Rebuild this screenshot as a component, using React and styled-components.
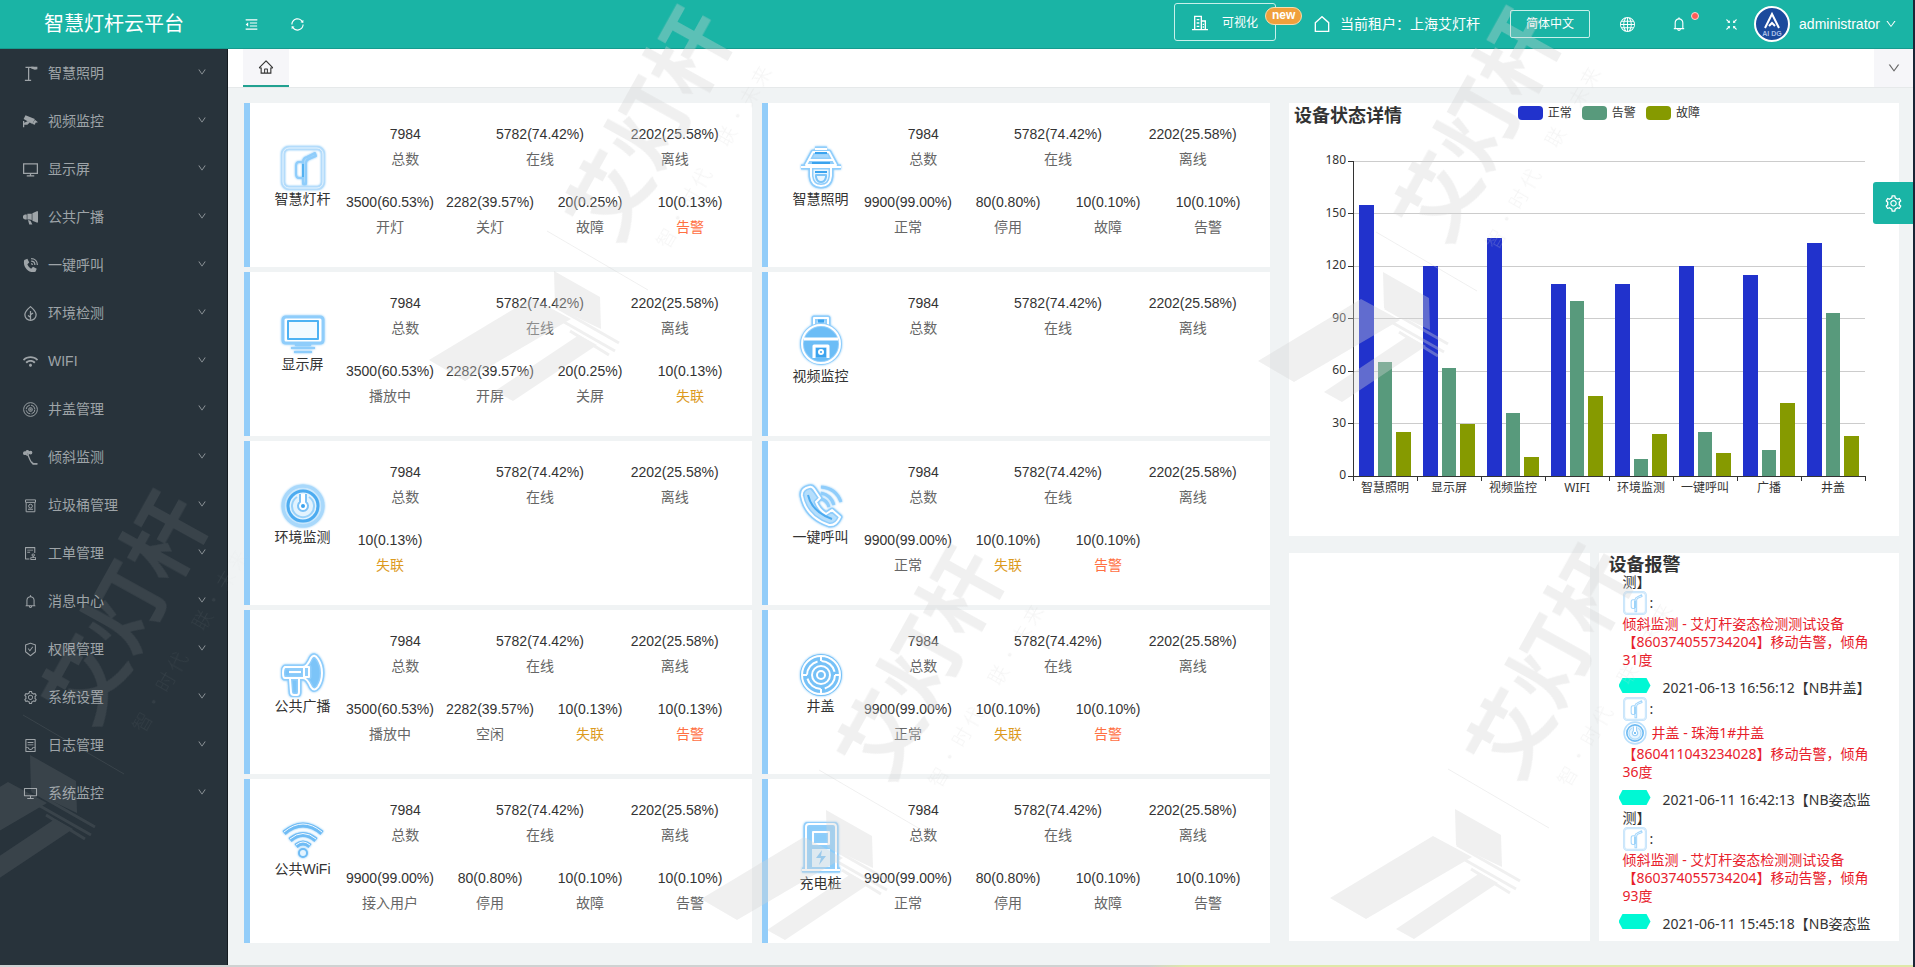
import styled, { createGlobalStyle, css } from 'styled-components'
import {
  AiOutlineAudit,
  AiOutlineBell,
  AiOutlineContainer,
  AiOutlineDesktop,
  AiOutlineDown,
  AiOutlineFullscreenExit,
  AiOutlineHome,
  AiOutlineMenuFold,
  AiOutlineSafetyCertificate,
  AiOutlineSetting,
  AiOutlineSync,
} from 'react-icons/ai'
import { BsGlobe } from 'react-icons/bs'
import { FaWifi } from 'react-icons/fa'

const colors = {
  teal: '#1ab4a5',
  sidebar: '#28333b',
  page: '#f0f3f4',
  bar: '#93cdf9',
  lost: '#dc9a1e',
  alarm: '#ff7043',
}

// sidebar glyphs

const Glyph = ({ children, fill = 'none', stroke = 'currentColor', width = 2 }) => (
  <svg
    viewBox="0 0 24 24"
    width="1em"
    height="1em"
    fill={fill}
    stroke={stroke}
    strokeWidth={width}
    aria-hidden="true"
  >
    {children}
  </svg>
)

const LampPostGlyph = () => (
  <Glyph>
    <path d="M9 23V2h8M3 23h10M4 2h6" />
    <path d="M13 1h10v4l-4 1-6-2z" fill="currentColor" stroke="none" />
  </Glyph>
)

const CameraGlyph = () => (
  <Glyph fill="currentColor" stroke="none">
    <path d="M4 2l15 6-4 8L1 8z" />
    <path d="M19 9l5 4-4 1-1 3-4-1z" />
    <path d="M0 11h2v3l6-3 3 2-4 4H2v4H0z" />
  </Glyph>
)

const ScreenGlyph = () => (
  <Glyph>
    <path d="M1 3h22v15H1zM12 18v4M6 22h12" />
  </Glyph>
)

const HornGlyph = () => (
  <Glyph fill="currentColor" stroke="none">
    <path d="M22 2h2v18h-2l-7-3V5zM7 6h7v10l-3-1H7zM3 7h3v8H3l-3-2V9zM8 16l4 1 3 6h-5z" />
  </Glyph>
)

const PhoneGlyph = () => (
  <Glyph>
    <path
      d="M2 3l5-2 3 6-3 3c1 3 3 5 6 7l3-3 6 3-2 5C9 25-1 14 2 3z"
      fill="currentColor"
      stroke="none"
    />
    <path d="M13 1c6 0 10 4 10 10M13 5c4 0 6 2 6 6M13 9q2 0 2 2" />
  </Glyph>
)

const LeafGlyph = () => (
  <Glyph>
    <path d="M12 1c6 5 9 9 9 13a9 9 0 0 1-18 0c0-4 3-8 9-13z" />
    <path d="M12 8v14M12 14l4-3M12 18l-4-3" />
  </Glyph>
)

const CoverGlyph = () => (
  <Glyph width={1.5}>
    <circle cx="12" cy="12" r="11" />
    <circle cx="12" cy="12" r="7" strokeDasharray="9 2" />
    <circle cx="12" cy="12" r="3" />
    <circle cx="12" cy="12" r="1" />
  </Glyph>
)

const TiltGlyph = () => (
  <Glyph>
    <path d="M3 3l4 6M7 9l4-6M8 8c3 7 4 12 8 14h7" />
    <circle cx="3" cy="5" r="2" fill="currentColor" />
    <circle cx="7" cy="3" r="2" fill="currentColor" />
    <circle cx="12" cy="4" r="2" fill="currentColor" />
    <path d="M15 18l2 3h6v2h-8z" fill="currentColor" stroke="none" />
  </Glyph>
)

const BinGlyph = () => (
  <Glyph width={1.6}>
    <path d="M5 8v14h14V8M4 3h16v4H4zM8 18h8" />
    <circle cx="12" cy="13" r="3" />
  </Glyph>
)

const BuildingGlyph = () => (
  <Glyph>
    <path d="M4 22V2h10v20M14 9h6v13M0 22h24M7 7h4M7 12h4M7 17h4M17 13v2M17 17v2" />
  </Glyph>
)

const HouseGlyph = () => (
  <Glyph>
    <path d="M2 10L12 1l10 9v13H2z" />
  </Glyph>
)

// glowing device icons, every outline is a blue halo with a white core

const Neon = ({ d }) => (
  <>
    <path d={d} stroke="#8fcdfb" strokeWidth="5" />
    <path d={d} stroke="#fff" strokeWidth="2" />
  </>
)

const PoleIcon = () => (
  <>
    <rect x="2" y="2" width="40" height="40" rx="6" stroke="#b4dcfb" strokeWidth="4" />
    <rect x="2" y="2" width="40" height="40" rx="6" stroke="#e6f4fe" strokeWidth="1" />
    <path d="M22 38V16q0-4 4-5l8-4 1 3-7 3q-3 1-3 4v21z" stroke="#8fcdfb" strokeWidth="2" />
    <path d="M22 16h-4q-3 0-3 4v8q0 4 3 4h4" stroke="#8fcdfb" strokeWidth="2" />
    <path d="M22 18v13" stroke="#53b1f1" strokeWidth="2" />
  </>
)

const LightIcon = () => (
  <>
    <path d="M14 5h16l7 14H7z" fill="#a6d7fb" />
    <path d="M12 22h20v9q-1 9-10 9t-10-9z" fill="#e9f6ff" />
    <Neon d="M16 3h12M14 6h16l7 13H7zM2 21h40M10 14h24M12 22v8q1 10 10 10t10-10v-8" />
    <path d="M16 7h12M13 17h18M16 26h12" stroke="#3ba3ee" strokeWidth="2" />
    <path d="M17 29h10v2q-1 5-5 5t-5-5z" stroke="#7cc4f8" strokeWidth="2" />
  </>
)

const DisplayIcon = () => (
  <>
    <path
      d="M5 2h34q3 0 3 3v20q0 3-3 3H5q-3 0-3-3V5q0-3 3-3z"
      stroke="#8fcdfb"
      strokeWidth="3"
      fill="#fff"
    />
    <path d="M10 33h24M14 30h16M13 37h18" stroke="#8fcdfb" strokeWidth="2" />
    <rect x="7" y="6" width="30" height="18" stroke="#4fb2f3" strokeWidth="2" fill="#f3faff" />
  </>
)

const DomeIcon = () => (
  <>
    <circle cx="22" cy="29" r="18" fill="#6cbdf6" />
    <Neon d="M15 11V3h14v8" />
    <circle cx="22" cy="29" r="19" stroke="#8fcdfb" strokeWidth="4" />
    <circle cx="22" cy="29" r="19" stroke="#fff" strokeWidth="2" />
    <path d="M5 24h34M15 43V31h14v12" stroke="#fff" strokeWidth="3" />
    <rect x="17" y="33" width="10" height="9" fill="#3ba3ee" />
    <circle cx="22" cy="37" r="3" fill="#fff" />
    <circle cx="22" cy="37" r="1" fill="#3ba3ee" />
    <path d="M19 6h6" stroke="#3ba3ee" strokeWidth="3" />
  </>
)

const DialIcon = () => (
  <>
    <circle cx="22" cy="22" r="20" stroke="#a8d8fb" strokeWidth="3" />
    <circle cx="22" cy="22" r="15" stroke="#4cabf0" strokeWidth="3" fill="#e3f3fe" />
    <path d="M16 13a11 11 0 1 0 12 0" stroke="#9ad2fa" strokeWidth="2" />
    <path d="M19 10v8a5 5 0 1 0 6 0v-8" stroke="#7cc2f7" strokeWidth="2" fill="#fff" />
    <circle cx="22" cy="22" r="2" fill="#3ba3ee" />
  </>
)

const CallIcon = () => (
  <>
    <path d="M10 4L3 9q-2 18 26 32 6 2 12-8l-8-7-6 4q-7-4-9-11l2-5z" fill="#b5defc" />
    <Neon d="M10 3q-8 2-7 9 4 21 27 29 7 1 11-8l-8-7-6 4q-7-4-10-12l4-4-6-9q-2-3-5-2z" />
    <path
      d="M22 3q15 1 20 15M22 9q10 2 13 12M22 15q6 1 8 8"
      stroke="#8fcdfb"
      strokeWidth="3"
    />
    <path d="M9 11q4 17 24 24" stroke="#4cabf0" strokeWidth="2" />
  </>
)

const HornIcon = () => (
  <>
    <path d="M4 14h22l6-9q8 2 8 15t-8 16l-6-12H4zM10 26h7l2 15h-7z" fill="#7cc4f8" />
    <Neon d="M4 14h18q4 0 8-9 3-5 7 1 4 6 4 14t-4 14q-4 5-7 0-4-9-8-9H4q-2 0-2-5t2-6zM9 26l1 13q0 3 3 3h3q2 0 2-3V26M23 14h5v10h-5zM8 19h12" />
  </>
)

const ManholeIcon = () => (
  <>
    <circle cx="22" cy="22" r="21" fill="#76c1f7" />
    <circle cx="22" cy="22" r="19" stroke="#fff" strokeWidth="2" />
    <circle cx="22" cy="22" r="14" stroke="#fff" strokeWidth="2" strokeDasharray="18 4" />
    <circle cx="22" cy="22" r="9" stroke="#fff" strokeWidth="2" />
    <circle cx="22" cy="22" r="4" stroke="#fff" strokeWidth="2" />
    <path d="M22 3v5M22 36v5M3 22h5M36 22h5" stroke="#fff" strokeWidth="2" />
  </>
)

const WaveIcon = () => (
  <>
    <path d="M3 11q19-16 38 0M9 18q13-11 26 0M15 24q7-6 14 0" stroke="#6fbcf5" strokeWidth="5" />
    <path d="M3 10q19-16 38 0M9 17q13-11 26 0M15 23q7-6 14 0" stroke="#f2f9ff" strokeWidth="1" />
    <circle cx="22" cy="31" r="4" stroke="#6fbcf5" strokeWidth="2" fill="#e4f4ff" />
  </>
)

const ChargeIcon = () => (
  <>
    <path d="M7 3h30v44H7z" fill="#8bccf9" />
    <Neon d="M7 47V5q0-3 3-3h24q3 0 3 3v42M3 48h38M14 10h16v12H14z" />
    <rect x="13" y="27" width="18" height="18" fill="#e4f4ff" />
    <path d="M23 28l-6 8h5l-2 7 7-9h-5z" fill="#7cc4f8" />
  </>
)

const deviceIcons = {
  pole: { Icon: PoleIcon, height: 44 },
  light: { Icon: LightIcon, height: 44 },
  display: { Icon: DisplayIcon, height: 40 },
  dome: { Icon: DomeIcon, height: 52 },
  dial: { Icon: DialIcon, height: 44 },
  call: { Icon: CallIcon, height: 44 },
  horn: { Icon: HornIcon, height: 44 },
  manhole: { Icon: ManholeIcon, height: 44 },
  wave: { Icon: WaveIcon, height: 38 },
  charge: { Icon: ChargeIcon, height: 52 },
}

const DeviceIcon = ({ name, small }) => {
  const { Icon, height } = deviceIcons[name]

  return (
    <StyledDeviceSvg
      viewBox={`0 0 44 ${height}`}
      width={small ? 24 : 44}
      height={small ? 24 : height}
      fill="none"
      strokeLinejoin="round"
      $small={small}
      aria-hidden="true"
    >
      <Icon />
    </StyledDeviceSvg>
  )
}

// data

const menu = [
  { label: '智慧照明', Icon: LampPostGlyph },
  { label: '视频监控', Icon: CameraGlyph },
  { label: '显示屏', Icon: ScreenGlyph },
  { label: '公共广播', Icon: HornGlyph },
  { label: '一键呼叫', Icon: PhoneGlyph },
  { label: '环境检测', Icon: LeafGlyph },
  { label: 'WIFI', Icon: FaWifi },
  { label: '井盖管理', Icon: CoverGlyph },
  { label: '倾斜监测', Icon: TiltGlyph },
  { label: '垃圾桶管理', Icon: BinGlyph },
  { label: '工单管理', Icon: AiOutlineAudit },
  { label: '消息中心', Icon: AiOutlineBell },
  { label: '权限管理', Icon: AiOutlineSafetyCertificate },
  { label: '系统设置', Icon: AiOutlineSetting },
  { label: '日志管理', Icon: AiOutlineContainer },
  { label: '系统监控', Icon: AiOutlineDesktop },
]

const totals = [
  ['7984', '总数'],
  ['5782(74.42%)', '在线'],
  ['2202(25.58%)', '离线'],
]

const devices = [
  {
    name: '智慧灯杆',
    icon: 'pole',
    stats: [
      ['3500(60.53%)', '开灯'],
      ['2282(39.57%)', '关灯'],
      ['20(0.25%)', '故障'],
      ['10(0.13%)', '告警', 'alarm'],
    ],
  },
  {
    name: '智慧照明',
    icon: 'light',
    stats: [
      ['9900(99.00%)', '正常'],
      ['80(0.80%)', '停用'],
      ['10(0.10%)', '故障'],
      ['10(0.10%)', '告警'],
    ],
  },
  {
    name: '显示屏',
    icon: 'display',
    stats: [
      ['3500(60.53%)', '播放中'],
      ['2282(39.57%)', '开屏'],
      ['20(0.25%)', '关屏'],
      ['10(0.13%)', '失联', 'lost'],
    ],
  },
  { name: '视频监控', icon: 'dome', stats: [] },
  { name: '环境监测', icon: 'dial', stats: [['10(0.13%)', '失联', 'lost']] },
  {
    name: '一键呼叫',
    icon: 'call',
    stats: [
      ['9900(99.00%)', '正常'],
      ['10(0.10%)', '失联', 'lost'],
      ['10(0.10%)', '告警', 'alarm'],
    ],
  },
  {
    name: '公共广播',
    icon: 'horn',
    stats: [
      ['3500(60.53%)', '播放中'],
      ['2282(39.57%)', '空闲'],
      ['10(0.13%)', '失联', 'lost'],
      ['10(0.13%)', '告警', 'alarm'],
    ],
  },
  {
    name: '井盖',
    icon: 'manhole',
    stats: [
      ['9900(99.00%)', '正常'],
      ['10(0.10%)', '失联', 'lost'],
      ['10(0.10%)', '告警', 'alarm'],
    ],
  },
  {
    name: '公共WiFi',
    icon: 'wave',
    stats: [
      ['9900(99.00%)', '接入用户'],
      ['80(0.80%)', '停用'],
      ['10(0.10%)', '故障'],
      ['10(0.10%)', '告警'],
    ],
  },
  {
    name: '充电桩',
    icon: 'charge',
    stats: [
      ['9900(99.00%)', '正常'],
      ['80(0.80%)', '停用'],
      ['10(0.10%)', '故障'],
      ['10(0.10%)', '告警'],
    ],
  },
]

const series = [
  { label: '正常', color: '#2132cc' },
  { label: '告警', color: '#589a7c' },
  { label: '故障', color: '#869a00' },
]

const chartData = [
  { label: '智慧照明', values: [155, 65, 25] },
  { label: '显示屏', values: [120, 62, 30] },
  { label: '视频监控', values: [136, 36, 11] },
  { label: 'WIFI', values: [110, 100, 46] },
  { label: '环境监测', values: [110, 10, 24] },
  { label: '一键呼叫', values: [120, 25, 13] },
  { label: '广播', values: [115, 15, 42] },
  { label: '井盖', values: [133, 93, 23] },
]

const alerts = [
  {
    id: 1,
    source: '测】',
    title: '倾斜监测 - 艾灯杆姿态检测测试设备',
    text: '【860374055734204】移动告警，倾角31度',
  },
  {
    id: 2,
    time: '2021-06-13 16:56:12',
    source: '【NB井盖】',
    icon: 'dial',
    title: '井盖 - 珠海1#井盖',
    text: '【860411043234028】移动告警，倾角36度',
  },
  {
    id: 3,
    time: '2021-06-11 16:42:13',
    source: '【NB姿态监测】',
    title: '倾斜监测 - 艾灯杆姿态检测测试设备',
    text: '【860374055734204】移动告警，倾角93度',
  },
  { id: 4, time: '2021-06-11 15:45:18', source: '【NB姿态监' },
]

// chart

const CHART = { left: 64, top: 33, step: 64, unit: 1.75 }

const StatusChart = () => {
  const bottom = CHART.top + 180 * CHART.unit
  const right = CHART.left + chartData.length * CHART.step

  return (
    <StyledChartSvg viewBox="0 0 610 407" role="img" aria-label="设备状态详情">
      {[0, 30, 60, 90, 120, 150, 180].map(value => {
        const y = bottom - value * CHART.unit

        return (
          <g key={value}>
            <path d={`M${CHART.left} ${y}H${right}`} stroke="#ccc" />
            <path d={`M${CHART.left - 5} ${y}h5`} stroke="#333" />
            <text x={CHART.left - 7} y={y + 3} textAnchor="end">
              {value}
            </text>
          </g>
        )
      })}
      {chartData.map(({ label, values }, index) => {
        const x = CHART.left + index * CHART.step

        return (
          <g key={label}>
            {values.map((value, i) => (
              <rect
                key={series[i].label}
                x={x + 6 + i * 18.5}
                y={bottom - value * CHART.unit}
                width="14.5"
                height={value * CHART.unit}
                fill={series[i].color}
              />
            ))}
            <path d={`M${x} ${bottom}v5`} stroke="#333" />
            <text x={x + 32} y={bottom + 16} textAnchor="middle">
              {label}
            </text>
          </g>
        )
      })}
      <path
        d={`M${CHART.left} ${CHART.top}V${bottom}H${right}v5`}
        fill="none"
        stroke="#333"
      />
    </StyledChartSvg>
  )
}

// watermark

const stamps = [
  { x: 0, y: 0, opacity: 0.36 },
  { x: 829, y: 1, opacity: 0.36 },
  { x: 272, y: 539, opacity: 0.36 },
  { x: 901, y: 538, opacity: 0.36 },
  { x: -524, y: 484, opacity: 0.1 },
]

const Watermark = () => (
  <StyledWatermarkSvg aria-hidden="true">
    {stamps.map(({ x, y, opacity }) => (
      <g key={x} transform={`translate(${x} ${y})`} fill="#d5d5d5" opacity={opacity}>
        <path d="M554 271l46 26 1 32-46-22zM429 360l103-62 39 21-106 62zM495 391l84-56 18 10-84 56z" />
        <path
          d="M556 307l63 36M550 314l65 37M570 331l39 24"
          stroke="#d5d5d5"
          strokeWidth="3"
        />
        <path d="M547 231l101 59" stroke="#d5d5d5" />
        <text transform="translate(616 246) rotate(-61)" fontSize="82" fontWeight="700">
          艾灯杆
        </text>
        <g fontSize="19" fontWeight="300" opacity="0.7">
          <text transform="translate(668 250) rotate(-60)">智 · 时 代</text>
          <text transform="translate(728 148) rotate(-60)">联 · 未 来</text>
        </g>
      </g>
    ))}
  </StyledWatermarkSvg>
)

// page parts

const Header = () => (
  <StyledHeader>
    <StyledLogoH1>智慧灯杆云平台</StyledLogoH1>
    <StyledHeaderTools>
      <IconButton aria-label="收起菜单">
        <AiOutlineMenuFold />
      </IconButton>
      <IconButton aria-label="刷新">
        <AiOutlineSync />
      </IconButton>
    </StyledHeaderTools>
    <VisualButton>
      <BuildingGlyph />
      <span>可视化</span>
      <StyledNewBadge>new</StyledNewBadge>
    </VisualButton>
    <StyledTenantDiv>
      <HouseGlyph />
      当前租户：上海艾灯杆
    </StyledTenantDiv>
    <LanguageButton>简体中文</LanguageButton>
    <StyledHeaderIcons>
      <IconButton aria-label="语言">
        <BsGlobe />
      </IconButton>
      <BellButton aria-label="消息">
        <AiOutlineBell />
        <StyledDot />
      </BellButton>
      <IconButton aria-label="退出全屏">
        <AiOutlineFullscreenExit />
      </IconButton>
    </StyledHeaderIcons>
    <UserButton>
      <svg viewBox="0 0 36 36" width="36" height="36" aria-hidden="true">
        <circle cx="18" cy="18" r="17" fill="#1b4a9c" stroke="#fff" strokeWidth="2" />
        <path d="M11 22l7-14 7 14M15 20l3-3 3 3" fill="none" stroke="#fff" strokeWidth="2" />
        <text x="18" y="30" fontSize="7" fontWeight="700" fill="#a9bfe6" textAnchor="middle">
          AI DG
        </text>
      </svg>
      administrator
      <AiOutlineDown />
    </UserButton>
  </StyledHeader>
)

const Sidebar = () => (
  <StyledNav>
    <StyledMenuUl>
      {menu.map(({ label, Icon }) => (
        <li key={label}>
          <MenuButton>
            <Icon />
            <StyledMenuLabel>{label}</StyledMenuLabel>
            <StyledMenuArrow />
          </MenuButton>
        </li>
      ))}
    </StyledMenuUl>
  </StyledNav>
)

const Stat = ({ value, label, tone }) => (
  <StyledStatDiv>
    <StyledStatLabelDt $tone={tone}>{label}</StyledStatLabelDt>
    <StyledStatValueDd>{value}</StyledStatValueDd>
  </StyledStatDiv>
)

const DeviceCard = ({ name, icon, stats }) => (
  <StyledCardArticle>
    <StyledCardNameDiv>
      <DeviceIcon name={icon} />
      <span>{name}</span>
    </StyledCardNameDiv>
    <div>
      <StyledStatsDl $columns={3}>
        {totals.map(([value, label]) => (
          <Stat key={label} value={value} label={label} />
        ))}
      </StyledStatsDl>
      {stats.length > 0 && (
        <StyledStatsDl $columns={4}>
          {stats.map(([value, label, tone]) => (
            <Stat key={label} value={value} label={label} tone={tone} />
          ))}
        </StyledStatsDl>
      )}
    </div>
  </StyledCardArticle>
)

const Alert = ({ time, source, icon, title, text }) => (
  <StyledAlertLi>
    {time && <StyledTag />}
    <StyledAlertTimeDiv $indent={Boolean(time)}>
      {time}
      {source}
    </StyledAlertTimeDiv>
    {title && (
      <>
        <StyledAlertIconDiv>
          <DeviceIcon name="pole" small />:
        </StyledAlertIconDiv>
        <StyledAlertTitleDiv>
          {icon && <DeviceIcon name={icon} small />}
          {title}
        </StyledAlertTitleDiv>
        <StyledAlertTextDiv>{text}</StyledAlertTextDiv>
      </>
    )}
  </StyledAlertLi>
)

const App = () => (
  <StyledPage>
    <GlobalStyle />
    <Header />
    <StyledBody>
      <Sidebar />
      <StyledMain>
        <StyledTabs>
          <HomeTab aria-label="首页">
            <AiOutlineHome />
          </HomeTab>
          <TabsMenuButton aria-label="更多标签">
            <AiOutlineDown />
          </TabsMenuButton>
        </StyledTabs>
        <StyledContent>
          <StyledCards>
            {devices.map(device => (
              <DeviceCard key={device.name} {...device} />
            ))}
          </StyledCards>
          <StyledAside>
            <StyledChartSection>
              <StyledChartHeader>
                <StyledTitleH2>设备状态详情</StyledTitleH2>
                <StyledLegendUl>
                  {series.map(({ label, color }) => (
                    <StyledLegendLi key={label} $color={color}>
                      {label}
                    </StyledLegendLi>
                  ))}
                </StyledLegendUl>
              </StyledChartHeader>
              <StatusChart />
            </StyledChartSection>
            <StyledBottomPanels>
              <StyledPanel />
              <StyledAlertsSection>
                <StyledTitleH2>设备报警</StyledTitleH2>
                <StyledAlertsUl>
                  {alerts.map(alert => (
                    <Alert key={alert.id} {...alert} />
                  ))}
                </StyledAlertsUl>
              </StyledAlertsSection>
            </StyledBottomPanels>
          </StyledAside>
        </StyledContent>
      </StyledMain>
    </StyledBody>
    <StyledEdge />
    <SettingsButton aria-label="设置">
      <AiOutlineSetting />
    </SettingsButton>
    <Watermark />
  </StyledPage>
)

export default App

const GlobalStyle = createGlobalStyle`
  * {
    box-sizing: border-box;
  }

  body {
    margin: 0;
    font: 14px/18px 'Liberation Sans', 'Noto Sans CJK SC', sans-serif;
    color: #333;
  }

  h1, h2, ul, dl, dd {
    margin: 0;
    padding: 0;
    list-style: none;
  }

  button {
    font: inherit;
    color: inherit;
    background: none;
    border: 0;
    padding: 0;
    cursor: pointer;
  }
`

const uiFont = css`
  font-family: 'Noto Sans', 'Noto Sans CJK SC', sans-serif;
`

const centered = css`
  display: flex;
  align-items: center;
  justify-content: center;
`

const StyledPage = styled.div`
  display: flex;
  flex-direction: column;
  min-height: 100vh;
  background: ${colors.page};
  border-right: 2px solid #1b2536;
`

const StyledHeader = styled.header`
  display: flex;
  align-items: center;
  height: 49px;
  padding-right: 16px;
  color: #fff;
  background: ${colors.teal};
  border-bottom: 1px solid #159b8e;
`

const StyledLogoH1 = styled.h1`
  width: 228px;
  font-size: 20px;
  line-height: 28px;
  font-weight: 400;
  text-align: center;
`

const StyledHeaderTools = styled.div`
  display: flex;
  gap: 30px;
  margin-right: auto;
  padding-left: 15px;
`

const IconButton = styled.button`
  ${centered};
  width: 16px;
  height: 16px;
  font-size: 15px;
`

const VisualButton = styled.button`
  ${centered};
  position: relative;
  gap: 14px;
  width: 102px;
  height: 38px;
  margin: 0 38px 4px 0;
  padding-top: 2px;
  font-size: 12px;
  border: 1px solid #c8f0ea;
  border-radius: 3px;

  > svg {
    font-size: 16px;
  }
`

const StyledNewBadge = styled.span`
  position: absolute;
  top: 3px;
  right: -27px;
  width: 37px;
  height: 18px;
  line-height: 15px;
  font-weight: 700;
  background: #f0a03c;
  border: 1px solid #f8dcae;
  border-radius: 9px;
`

const StyledTenantDiv = styled.div`
  display: flex;
  align-items: center;
  gap: 10px;
  margin-right: 30px;

  svg {
    font-size: 16px;
  }
`

const LanguageButton = styled.button`
  width: 80px;
  height: 28px;
  font-size: 12px;
  border: 1px solid #c8f0ea;
  border-radius: 2px;
`

const StyledHeaderIcons = styled.div`
  display: flex;
  align-items: center;
  gap: 36px;
  margin: 0 15px 0 29px;
`

const BellButton = styled(IconButton)`
  position: relative;
  font-size: 20px;
`

const StyledDot = styled.span`
  position: absolute;
  top: -4px;
  right: -12px;
  width: 8px;
  height: 8px;
  background: #ff5b57;
  border: 1px solid #ffd5cf;
  border-radius: 50%;
`

const UserButton = styled.button`
  display: flex;
  align-items: center;
  gap: 9px;

  svg:last-child {
    margin-left: -4px;
    font-size: 12px;
  }
`

const StyledBody = styled.div`
  display: flex;
  flex: 1;
`

const StyledNav = styled.nav`
  flex: 0 0 228px;
  color: #9ea4a8;
  background: ${colors.sidebar};
  border-right: 1px solid #141b20;
`

const StyledMenuUl = styled.ul``

const MenuButton = styled.button`
  display: flex;
  align-items: center;
  width: 100%;
  height: 48px;
  padding: 0 20px 0 23px;
  text-align: left;

  svg {
    flex: none;
    font-size: 15px;
  }
`

const StyledMenuLabel = styled.span`
  flex: 1;
  margin-left: 10px;
`

const StyledMenuArrow = styled(AiOutlineDown)`
  && {
    margin-bottom: 3px;
    font-size: 10px;
  }
`

const StyledMain = styled.main`
  flex: 1;
  min-width: 0;
`

const StyledTabs = styled.div`
  display: flex;
  justify-content: space-between;
  height: 39px;
  padding-left: 15px;
  background: #fff;
  border-bottom: 1px solid #e6e9ea;
`

const HomeTab = styled.button`
  ${centered};
  width: 46px;
  font-size: 16px;
  background: #f6f6f9;
  border-bottom: 2px solid #22a191;
`

const TabsMenuButton = styled.button`
  ${centered};
  width: 39px;
  font-size: 14px;
  color: #666;
  background: #f6f6f9;
`

const StyledContent = styled.div`
  display: grid;
  grid-template-columns: minmax(0, 1026fr) minmax(0, 610fr);
  align-items: start;
  gap: 19px;
  padding: 15px 14px 22px 16px;
`

const StyledCards = styled.div`
  display: grid;
  grid-template-columns: repeat(2, minmax(0, 1fr));
  gap: 5px 10px;
`

const StyledCardArticle = styled.article`
  display: grid;
  grid-template-columns: 71px minmax(0, 1fr);
  min-height: 164px;
  padding: 19px 10px 18px 17px;
  background: #fff;
  border-left: 6px solid ${colors.bar};
`

const StyledCardNameDiv = styled.div`
  display: flex;
  flex-direction: column;
  align-items: center;
  padding-top: 24px;
`

const StyledDeviceSvg = styled.svg`
  flex: none;
  display: block;
  opacity: ${({ $small }) => ($small ? 0.8 : 1)};
  filter: ${({ $small }) => ($small ? 'none' : 'drop-shadow(0 0 1px #7cc4f8)')};
`

const StyledStatsDl = styled.dl`
  display: grid;
  grid-template-columns: repeat(${({ $columns }) => $columns}, 1fr);
  line-height: 25px;
  text-align: center;

  & + & {
    margin-top: 18px;
    padding: 0 2px;
  }
`

const StyledStatDiv = styled.div`
  display: flex;
  flex-direction: column-reverse;
`

const StyledStatLabelDt = styled.dt`
  color: ${({ $tone }) => colors[$tone] || '#666'};
`

const StyledStatValueDd = styled.dd`
  white-space: nowrap;
`

const StyledAside = styled.div`
  display: grid;
  gap: 17px;
`

const StyledPanel = styled.section`
  background: #fff;
`

const StyledChartSection = styled(StyledPanel)`
  ${uiFont};
  min-height: 433px;
`

const StyledChartHeader = styled.div`
  display: flex;
  align-items: flex-start;
  height: 25px;
  padding: 3px 0 0 5px;
`

const StyledTitleH2 = styled.h2`
  font-size: 18px;
  line-height: 18px;
  font-weight: 700;

  ${StyledChartHeader} & {
    flex: 0 0 37%;
  }
`

const StyledLegendUl = styled.ul`
  display: flex;
  gap: 10px;
`

const StyledLegendLi = styled.li`
  display: flex;
  align-items: center;
  gap: 5px;
  font-size: 12px;
  line-height: 14px;

  &::before {
    content: '';
    width: 25px;
    height: 14px;
    background: ${({ $color }) => $color};
    border-radius: 4px;
  }
`

const StyledChartSvg = styled.svg`
  display: block;
  width: 100%;
  font-size: 12px;
  fill: #333;
  shape-rendering: crispEdges;
`

const StyledBottomPanels = styled.div`
  display: grid;
  grid-template-columns: minmax(0, 1fr) minmax(0, 1fr);
  gap: 9px;
  min-height: 388px;
`

const StyledAlertsSection = styled(StyledPanel)`
  ${uiFont};
  padding: 2px 10px 0;
`

const StyledAlertsUl = styled.ul`
  display: grid;
  gap: 10px;
  padding: 0 6px 0 14px;
`

const StyledAlertLi = styled.li`
  position: relative;
`

const StyledTag = styled.span`
  position: absolute;
  top: -1px;
  left: -4px;
  width: 32px;
  height: 15px;
  background: #00f8d4;
  clip-path: polygon(0 50%, 4px 0, 28px 0, 100% 50%, 28px 100%, 4px 100%);
`

const StyledAlertTimeDiv = styled.div`
  text-indent: ${({ $indent }) => ($indent ? 40 : 0)}px;
`

const StyledAlertIconDiv = styled.div`
  display: flex;
  align-items: center;
  gap: 3px;
`

const StyledAlertTitleDiv = styled.div`
  display: flex;
  align-items: center;
  gap: 5px;
  color: #e8212c;
`

const StyledAlertTextDiv = styled.div`
  color: #e8212c;
`

const StyledEdge = styled.div`
  height: 2px;
  background: linear-gradient(90deg, #cfd2d2 60%, #dfe8a8 62%);
`

const SettingsButton = styled.button`
  ${centered};
  position: fixed;
  top: 182px;
  right: 2px;
  width: 40px;
  height: 42px;
  font-size: 19px;
  color: #fff;
  background: ${colors.teal};
  border-radius: 3px 0 0 3px;
`

const StyledWatermarkSvg = styled.svg`
  position: fixed;
  inset: 0;
  width: 100%;
  height: 100%;
  pointer-events: none;
  font-family: 'Noto Sans CJK SC', sans-serif;
`
